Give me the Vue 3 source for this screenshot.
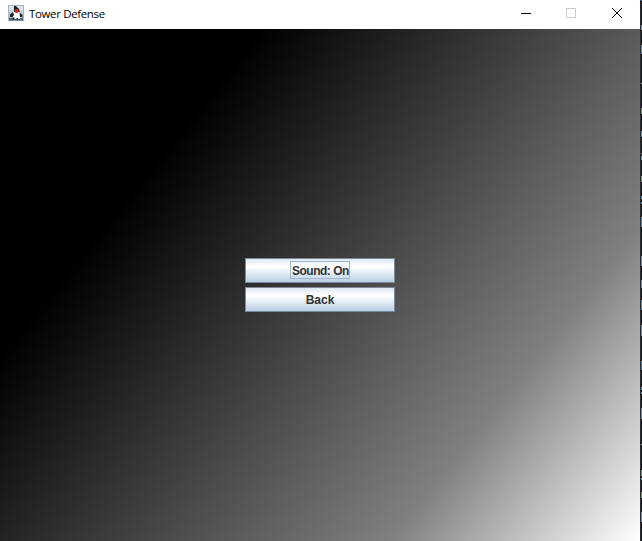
<script setup>
const buttons = [
  { label: 'Sound: On', focused: true },
  { label: 'Back', focused: false },
]
const marks = [
  [0, 1, '#587dac'], [25, 5, '#7597a8'], [45, 9, '#7187b0'], [83, 1, '#9aa7b5'],
  [108, 6, '#7e9184'], [131, 6, '#71899b'], [153, 1, '#6d8297'], [156, 4, '#7991a4'],
  [176, 6, '#7c9082'], [196, 3, '#7593a6'], [202, 2, '#7593a6'], [217, 10, '#6985a7'],
  [256, 10, '#7188a9'], [280, 8, '#7188a9'], [300, 10, '#5c86a5'], [325, 11, '#7188a9'],
  [361, 9, '#56799a'], [387, 3, '#7593a6'], [392, 2, '#7593a6'], [408, 11, '#7188a9'],
  [444, 1, '#9aa7b5'], [470, 6, '#7e9184'], [478, 2, '#7593a6'], [492, 6, '#7c9082'],
  [512, 10, '#7188a9'],
]
</script>

<template>
  <div class="desktop">
    <main class="window">
      <header class="titlebar">
        <svg class="app-icon" width="16" height="16" viewBox="0 0 16 16">
          <defs>
            <linearGradient id="tile" x1="0" y1="0" x2="0" y2="1">
              <stop offset="0" stop-color="#e3ebf2" />
              <stop offset="1" stop-color="#9fb2c4" />
            </linearGradient>
          </defs>
          <rect x=".5" y=".5" width="15" height="15" fill="url(#tile)" stroke="#a5b4c2" />
          <path d="M1 13h14v2.500H1z" fill="#4d6880" />
          <path d="M6 1h1.800L11 4l1 3.500H6z" fill="#222" />
          <path d="M5 7h7l.5 4-1 3H5.500L4.500 11z" fill="#fff" />
          <path d="m2 9.500 3-2.500 1 3-1.500 2H2z" fill="#222" />
          <path d="m11.500 7.500 3 2.500v2h-2.500z" fill="#222" />
          <path d="M4.500 12.500h2v2h-2zM8.500 13h1.500v1.500H8.500z" fill="#222" />
          <circle cx="8.700" cy="6" r="2" fill="#e02626" />
        </svg>
        <h1>Tower Defense</h1>
        <svg class="controls" width="110" height="29" viewBox="0 0 110 29" fill="none" shape-rendering="crispEdges">
          <path d="M1 13.500h10" stroke="#000" />
          <rect x="46.500" y="8.500" width="9" height="9" stroke="#ccc" />
          <path d="m92 8 10 10m0-10L92 18" stroke="#000" shape-rendering="auto" />
        </svg>
      </header>
      <section class="content">
        <button v-for="b in buttons" :key="b.label" :class="{ focused: b.focused }">
          <span>{{ b.label }}</span>
        </button>
      </section>
    </main>
    <svg class="edge" width="2" height="541" viewBox="0 0 2 541" shape-rendering="crispEdges">
      <rect width="1" height="541" fill="#2b2b2b" />
      <rect x="1" width="1" height="541" fill="#11151d" />
      <rect v-for="m in marks" :key="m[0]" x="1" :y="m[0]" width="1" :height="m[1]" :fill="m[2]" />
    </svg>
  </div>
</template>

<style>
body { margin: 0; overflow: hidden; }
</style>
<style scoped>
.desktop { display: flex; width: 642px; height: 541px; overflow: hidden; }
.window { display: flex; flex-direction: column; width: 640px; }
.edge { display: block; }
.titlebar { display: flex; height: 29px; background: #fff; }
.app-icon { margin: 5px 5px 0 8px; }
h1 { flex: 1; margin: 0; font: 11.5px/28px "Open Sans", "Noto Sans", sans-serif; letter-spacing: -.36px; color: #000; }
.controls { margin-right: 10px; }
.content {
  flex: 1; display: flex; flex-direction: column; align-items: center; gap: 4px;
  box-sizing: border-box; padding-top: 229px;
  background: linear-gradient(128.66deg, #000 25%, #808080 76.2%, #fff 100%);
}
button {
  display: flex; align-items: flex-start; justify-content: center;
  box-sizing: border-box; width: 150px; height: 25px; padding: 2px 0 0;
  border: 1px solid #7a8a99; border-radius: 0;
  background: linear-gradient(#dde8f3 0, #fff 30%, #fff 36%, #b8cfe5 100%);
  color: #333; font: bold 12px/14px "Liberation Sans", Arial, sans-serif;
}
span { box-sizing: border-box; height: 18px; padding: 2px 1px 0; border: 1px solid transparent; white-space: nowrap; }
.focused span { width: 60px; border-color: #a3b8cc; letter-spacing: -.5px; }
</style>
